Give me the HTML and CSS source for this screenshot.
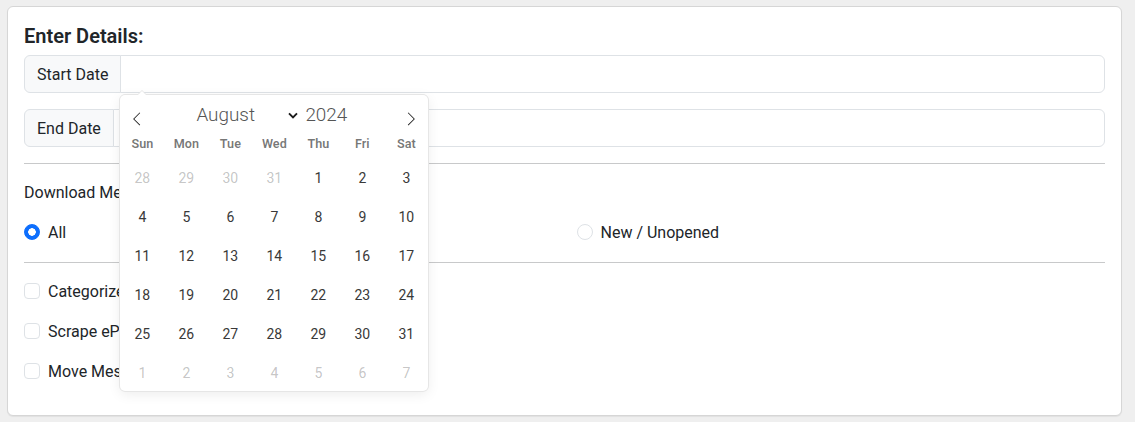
FILE: index.html
```html
<!DOCTYPE html>
<html lang="en">
<head>
<meta charset="utf-8">
<title>Enter Details</title>
<link rel="stylesheet" href="styles.css">
</head>
<body>
<div class="card">
  <h5 class="title">Enter Details:</h5>

  <div class="input-group">
    <span class="ig-text">Start Date</span>
    <div class="field-wrap">
      <input class="ig-input" type="text" readonly>
      <div class="calendar">
        <div class="cal-head">
          <span class="nav prev">
            <svg width="14" height="14" viewBox="0 0 17 17"><path d="M5.207 8.471l7.146 7.147-0.707 0.707-7.853-7.854 7.854-7.853 0.707 0.707-7.147 7.146z"/></svg>
          </span>
          <div class="cur-month">
            <span class="month-select">
              <span class="month-name">August</span>
              <svg class="caret" width="10" height="7" viewBox="0 0 10 7"><path d="M1 1.3l4 4 4-4" fill="none" stroke="#1a1a1a" stroke-width="1.9"/></svg>
            </span>
            <span class="year">2024</span>
          </div>
          <span class="nav next">
            <svg width="14" height="14" viewBox="0 0 17 17"><path d="M13.207 8.472l-7.854 7.854-0.707-0.707 7.146-7.146-7.146-7.148 0.707-0.707 7.854 7.854z"/></svg>
          </span>
        </div>
        <div class="weekdays">
          <span>Sun</span><span>Mon</span><span>Tue</span><span>Wed</span><span>Thu</span><span>Fri</span><span>Sat</span>
        </div>
        <div class="days">
          <span class="day muted">28</span><span class="day muted">29</span><span class="day muted">30</span><span class="day muted">31</span><span class="day">1</span><span class="day">2</span><span class="day">3</span>
          <span class="day">4</span><span class="day">5</span><span class="day">6</span><span class="day">7</span><span class="day">8</span><span class="day">9</span><span class="day">10</span>
          <span class="day">11</span><span class="day">12</span><span class="day">13</span><span class="day">14</span><span class="day">15</span><span class="day">16</span><span class="day">17</span>
          <span class="day">18</span><span class="day">19</span><span class="day">20</span><span class="day">21</span><span class="day">22</span><span class="day">23</span><span class="day">24</span>
          <span class="day">25</span><span class="day">26</span><span class="day">27</span><span class="day">28</span><span class="day">29</span><span class="day">30</span><span class="day">31</span>
          <span class="day muted">1</span><span class="day muted">2</span><span class="day muted">3</span><span class="day muted">4</span><span class="day muted">5</span><span class="day muted">6</span><span class="day muted">7</span>
        </div>
      </div>
    </div>
  </div>

  <div class="input-group">
    <span class="ig-text">End Date</span>
    <div class="field-wrap">
      <input class="ig-input" type="text" readonly>
    </div>
  </div>

  <hr class="divider">

  <div class="group-label">Download Messages:</div>
  <div class="radio-row">
    <label class="form-check tight"><span class="radio checked"></span><span class="check-text">All</span></label>
    <label class="form-check tight"><span class="radio"></span><span class="check-text">New / Unopened</span></label>
  </div>

  <hr class="divider">

  <label class="form-check"><span class="checkbox"></span><span class="check-text">Categorize Messages</span></label>
  <label class="form-check"><span class="checkbox"></span><span class="check-text">Scrape ePayment Details</span></label>
  <label class="form-check"><span class="checkbox"></span><span class="check-text">Move Messages to Folder</span></label>
</div>
</body>
</html>
```

FILE: styles.css
```css
* { box-sizing: border-box; }

html, body { margin: 0; }

body {
  background: #efefef;
  font-family: "Segoe UI", Roboto, "Noto Sans", "Liberation Sans", sans-serif;
  font-size: 16px;
  line-height: 1.5;
  color: #212529;
  padding: 6px 13px 7px 7px;
}

.card {
  background: #fff;
  border: 1px solid #d6d6d6;
  border-radius: 6px;
  box-shadow: 0 1px 1px rgba(0, 0, 0, 0.06);
  padding: 16px;
}

.title {
  margin: 0 0 8px;
  padding-top: 1px;
  height: 24px;
  font-size: 20px;
  font-weight: 600;
  line-height: 1.2;
}

.input-group {
  display: flex;
  margin-bottom: 16px;
}

.ig-text {
  padding: 7px 12px 5px;
  background: #f8f9fa;
  border: 1px solid #dee2e6;
  border-radius: 6px 0 0 6px;
  white-space: nowrap;
}

.field-wrap {
  flex: 1;
  position: relative;
  margin-left: -1px;
}

.ig-input {
  display: block;
  width: 100%;
  height: 38px;
  padding: 6px 12px;
  border: 1px solid #dee2e6;
  border-radius: 0 6px 6px 0;
  font: inherit;
  background: #fff;
  outline: none;
}

.divider {
  margin: 16px 0;
  border: 0;
  border-top: 1px solid #c8c9ca;
  height: 0;
}

.group-label {
  padding-top: 1px;
  margin-bottom: 15px;
}

.radio-row {
  display: grid;
  grid-template-columns: 1fr 1fr;
  column-gap: 24px;
}

.form-check {
  display: flex;
  align-items: flex-start;
  gap: 8px;
  min-height: 24px;
  margin-bottom: 15px;
}

.form-check.tight { margin-bottom: 1px; }

.check-text { padding-top: 1px; }

.radio,
.checkbox {
  flex-shrink: 0;
  width: 16px;
  height: 16px;
  margin-top: 4px;
  border: 1px solid #dee2e6;
  background: #fff;
}

.radio { border-radius: 50%; }

.radio.checked {
  border-color: #0d6efd;
  background: radial-gradient(circle, #fff 0 3.5px, #0d6efd 4px);
}

.checkbox { border-radius: 4px; }

/* calendar popup */
.calendar {
  position: absolute;
  top: calc(100% + 2px);
  left: 0;
  z-index: 10;
  width: 308px;
  background: #fff;
  border-radius: 5px;
  box-shadow: 1px 0 0 #e6e6e6, -1px 0 0 #e6e6e6, 0 1px 0 #e6e6e6, 0 -1px 0 #e6e6e6, 0 3px 13px rgba(0, 0, 0, 0.08);
  font-size: 14px;
  line-height: 24px;
  color: #393939;
}

.calendar::before,
.calendar::after {
  content: "";
  position: absolute;
  bottom: 100%;
  left: 22px;
  border: solid transparent;
}

.calendar::before {
  border-width: 5px;
  margin-left: -5px;
  border-bottom-color: #e6e6e6;
}

.calendar::after {
  border-width: 4px;
  margin-left: -4px;
  border-bottom-color: #fff;
}

.cal-head {
  display: flex;
  height: 34px;
}

.nav {
  width: 34px;
  height: 34px;
  padding: 17px 10px 3px;
  fill: #1f1f1f;
}

.nav svg { display: block; }

.cur-month {
  flex: 1;
  display: flex;
  align-items: flex-start;
  padding: 9px 0 0 38px;
  font-size: 18.9px;
  line-height: 22px;
  font-weight: 300;
  color: #555;
}

.month-select {
  display: flex;
  align-items: center;
  justify-content: space-between;
  width: 109px;
  height: 22px;
  padding: 0 3px 0 4px;
}

.caret { display: block; }

.year { margin-left: 4px; }

.weekdays {
  display: grid;
  grid-template-columns: repeat(7, 1fr);
  height: 28px;
  line-height: 30px;
  font-size: 12.6px;
  font-weight: 600;
  color: rgba(0, 0, 0, 0.54);
  text-align: center;
}

.days {
  display: grid;
  grid-template-columns: repeat(7, 1fr);
}

.day {
  height: 39px;
  line-height: 43px;
  text-align: center;
}

.day.muted { color: rgba(57, 57, 57, 0.3); }
```
